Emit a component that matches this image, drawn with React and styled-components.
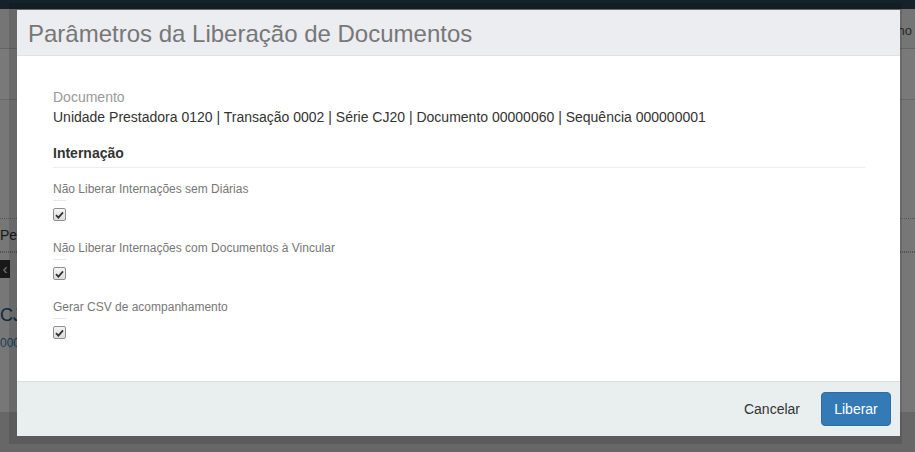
import styled, { createGlobalStyle } from "styled-components";

const GlobalStyle = createGlobalStyle`
  html, body { margin: 0; padding: 0; }
  body {
    width: 915px;
    height: 452px;
    overflow: hidden;
    font-family: "Liberation Sans", Arial, sans-serif;
    background: #e6e6e6;
  }
`;

function CheckIcon() {
  return (
    <svg width="9" height="8" viewBox="0 0 9 8">
      <path d="M1 4.2 L3.4 6.6 L8 1.4" fill="none" stroke="#333" strokeWidth="1.8" />
    </svg>
  );
}

export default function App() {
  const options = [
    "Não Liberar Internações sem Diárias",
    "Não Liberar Internações com Documentos à Vincular",
    "Gerar CSV de acompanhamento",
  ];
  return (
    <>
      <GlobalStyle />
      <Page>
        <TopBar />
        <PageHeader>
          <HeaderText>Trabalho</HeaderText>
        </PageHeader>
        <PageToolbar />
        <PageContent>
          <PageRow dotted>Pesquisa</PageRow>
          <PageRow>
            <PagerButton>‹</PagerButton>
          </PageRow>
          <PageLink>CJ20</PageLink>
          <PageSmall>00000060</PageSmall>
        </PageContent>
        <PageFooter />
      </Page>
      <Backdrop />
      <Frame>
        <Modal>
          <Header>
            <Title>Parâmetros da Liberação de Documentos</Title>
          </Header>
          <Body>
            <FieldLabel>Documento</FieldLabel>
            <FieldValue>
              Unidade Prestadora 0120 | Transação 0002 | Série CJ20 | Documento 00000060 | Sequência 000000001
            </FieldValue>
            <Section>Internação</Section>
            {options.map((o) => (
              <Option key={o}>
                <OptionLabel>{o}</OptionLabel>
                <Check>
                  <CheckIcon />
                </Check>
              </Option>
            ))}
          </Body>
          <Footer>
            <LinkButton>Cancelar</LinkButton>
            <PrimaryButton>Liberar</PrimaryButton>
          </Footer>
        </Modal>
      </Frame>
    </>
  );
}

const Page = styled.div`
  width: 915px;
  height: 452px;
  display: flex;
  flex-direction: column;
  background: #ececec;
`;
const TopBar = styled.div`
  height: 9px;
  background: #2a4454;
  flex: none;
`;
const PageHeader = styled.div`
  height: 40px;
  box-sizing: border-box;
  display: flex;
  justify-content: flex-end;
  align-items: center;
  padding: 0 3px 0 0;
  border-bottom: 1px solid #c8c8c8;
  background: #eaeaea;
  flex: none;
`;
const HeaderText = styled.span`
  font-size: 13px;
  color: #555;
  padding-top: 4px;
`;
const PageToolbar = styled.div`
  height: 50px;
  border-bottom: 1px solid #d2d2d2;
  background: #f2f2f2;
  flex: none;
`;
const PageContent = styled.div`
  flex: 1;
  padding-top: 118px;
  display: flex;
  flex-direction: column;
  background: #eeeeee;
`;
const PageRow = styled.div`
  height: 32px;
  display: flex;
  align-items: center;
  font-size: 14px;
  color: #333;
  border-top: 1px dotted #aaa;
  border-bottom: ${(p) => (p.dotted ? "1px dotted #aaa" : "none")};
`;
const PagerButton = styled.span`
  width: 10px;
  height: 18px;
  background: #333;
  color: #fff;
  font-size: 14px;
  display: flex;
  align-items: center;
  justify-content: center;
`;
const PageLink = styled.div`
  margin-top: 20px;
  font-size: 18px;
  color: #23527c;
`;
const PageSmall = styled.div`
  margin-top: 10px;
  font-size: 12px;
  color: #337ab7;
`;
const PageFooter = styled.div`
  height: 40px;
  background: #cfcfcf;
  flex: none;
`;

const Backdrop = styled.div`
  position: fixed;
  inset: 0;
  background: rgba(0, 0, 0, 0.5);
`;
const Frame = styled.div`
  position: fixed;
  left: 9px;
  top: 3px;
  padding: 7px 2px 8px 8px;
  background: rgba(0, 0, 0, 0.12);
`;
const Modal = styled.div`
  width: 883px;
  height: 426px;
  display: flex;
  flex-direction: column;
  background: #fff;
`;
const Header = styled.div`
  height: 46px;
  box-sizing: border-box;
  padding: 0 11px;
  display: flex;
  align-items: center;
  background: #ebedf0;
  border-bottom: 1px solid #e2e2e2;
  flex: none;
`;
const Title = styled.h4`
  margin: 0;
  font-size: 24px;
  font-weight: 400;
  color: #777;
  line-height: 1;
  padding-top: 2px;
`;
const Body = styled.div`
  flex: 1;
  padding: 31px 35px 0 36px;
  display: flex;
  flex-direction: column;
`;
const FieldLabel = styled.div`
  font-size: 14px;
  color: #999;
  line-height: 20px;
`;
const FieldValue = styled.div`
  font-size: 14px;
  color: #333;
  line-height: 20px;
`;
const Section = styled.div`
  margin-top: 16px;
  font-size: 14px;
  font-weight: 700;
  color: #333;
  line-height: 20px;
  padding-bottom: 4px;
  border-bottom: 1px solid #eee;
`;
const Option = styled.div`
  display: flex;
  flex-direction: column;
  align-items: flex-start;
  margin-top: 13px;
  & + & {
    margin-top: 19px;
  }
`;
const OptionLabel = styled.div`
  font-size: 12px;
  color: #777;
  line-height: 16px;
  padding-bottom: 4px;
  position: relative;
  &::after {
    content: "";
    position: absolute;
    left: 0;
    bottom: 0;
    width: 13px;
    border-bottom: 1px solid #e8e8e8;
  }
`;
const Check = styled.div`
  margin-top: 7px;
  width: 11px;
  height: 11px;
  border: 1px solid #8f8f8f;
  border-radius: 2px;
  background: linear-gradient(#f4f4f4, #dcdcdc);
  display: flex;
  align-items: center;
  justify-content: center;
`;
const Footer = styled.div`
  height: 55px;
  box-sizing: border-box;
  flex: none;
  display: flex;
  justify-content: flex-end;
  align-items: center;
  gap: 9px;
  padding: 0 9px 0 0;
  background: #e9eeee;
  border-top: 1px solid #dcdcdc;
`;
const LinkButton = styled.button`
  font-family: inherit;
  font-size: 14px;
  color: #333;
  background: transparent;
  border: none;
  padding: 6px 12px;
  line-height: 20px;
`;
const PrimaryButton = styled.button`
  font-family: inherit;
  font-size: 14px;
  color: #fff;
  background: #337ab7;
  border: 1px solid #2e6da4;
  border-radius: 4px;
  padding: 6px 12px;
  line-height: 19px;
  width: 70px;
  height: 34px;
`;
